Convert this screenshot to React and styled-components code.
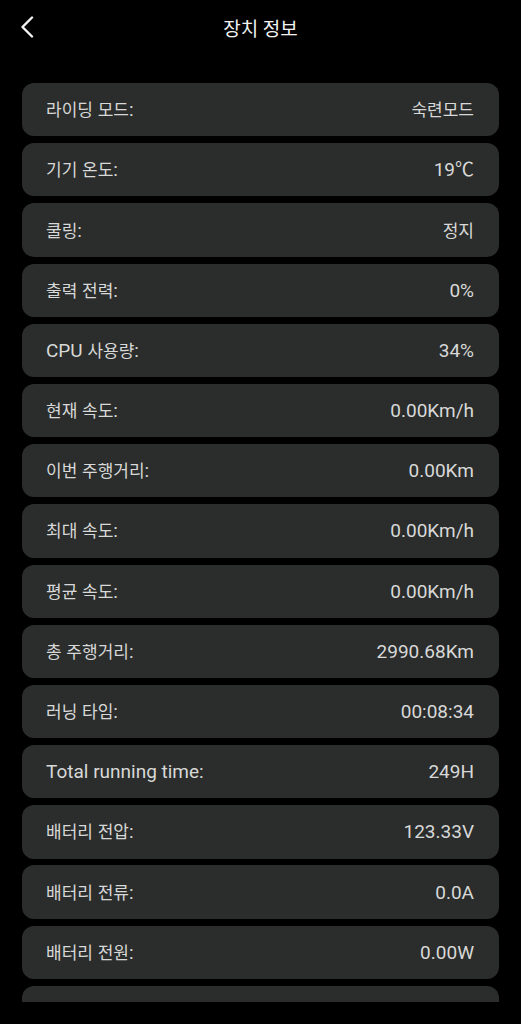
import React from "react";
import styled, { createGlobalStyle } from "styled-components";

const GlobalStyle = createGlobalStyle`
  html, body {
    margin: 0;
    padding: 0;
    background: #000;
  }
  body {
    font-family: Roboto, "Noto Sans CJK KR", sans-serif;
    -webkit-font-smoothing: antialiased;
  }
`;

const Page = styled.div`
  height: 1024px;
  display: flex;
  flex-direction: column;
  background: #000;
  color: #dcdcdc;
`;

const Header = styled.header`
  flex: none;
  height: 54px;
  display: flex;
  align-items: center;
  justify-content: center;
  position: relative;
`;

const BackButton = styled.button`
  position: absolute;
  left: 14px;
  top: 12px;
  width: 26px;
  height: 30px;
  padding: 0;
  border: 0;
  background: none;
  display: flex;
  align-items: center;
  justify-content: center;
  cursor: pointer;
`;

const Title = styled.h1`
  margin: 0;
  font-size: 19px;
  font-weight: 400;
  color: #f2f2f2;
`;

const Scroller = styled.div`
  flex: 1;
  margin-bottom: 22px;
  overflow: hidden;
  padding: 29px 22px 0;
  display: flex;
  flex-direction: column;
  gap: 6.9px;
`;

const Row = styled.div`
  flex: none;
  height: 53.3px;
  border-radius: 12px;
  background: #2a2d2b;
  display: flex;
  align-items: center;
  justify-content: space-between;
  padding: 0 25px 0 24px;
  font-size: 19px;
  line-height: 1;
`;

const Text = styled.span`
  color: #d8d8d8;
  white-space: nowrap;
`;

// hangul in the device font is narrower than Noto CJK, so it gets a smaller size
const Hangul = styled.span`
  font-size: 17px;
`;

function Mixed({ children }) {
  return children
    .split(/([\uAC00-\uD7A3]+)/)
    .filter(Boolean)
    .map((part, i) =>
      /[\uAC00-\uD7A3]/.test(part) ? <Hangul key={i}>{part}</Hangul> : part
    );
}

const items = [
  ["라이딩 모드:", "숙련모드"],
  ["기기 온도:", "19℃"],
  ["쿨링:", "정지"],
  ["출력 전력:", "0%"],
  ["CPU 사용량:", "34%"],
  ["현재 속도:", "0.00Km/h"],
  ["이번 주행거리:", "0.00Km"],
  ["최대 속도:", "0.00Km/h"],
  ["평균 속도:", "0.00Km/h"],
  ["총 주행거리:", "2990.68Km"],
  ["러닝 타임:", "00:08:34"],
  ["Total running time:", "249H"],
  ["배터리 전압:", "123.33V"],
  ["배터리 전류:", "0.0A"],
  ["배터리 전원:", "0.00W"],
];

export default function App() {
  return (
    <Page>
      <GlobalStyle />
      <Header>
        <BackButton aria-label="back">
          <svg width="14" height="22" viewBox="0 0 14 22" fill="none">
            <path
              d="M12 1.5L2.5 11L12 20.5"
              stroke="#f2f2f2"
              strokeWidth="2.4"
              strokeLinecap="round"
              strokeLinejoin="round"
            />
          </svg>
        </BackButton>
        <Title>장치 정보</Title>
      </Header>
      <Scroller>
        {items.map(([label, value]) => (
          <Row key={label}>
            <Text>
              <Mixed>{label}</Mixed>
            </Text>
            <Text>
              <Mixed>{value}</Mixed>
            </Text>
          </Row>
        ))}
        {/* next row, scrolled mostly out of view */}
        <Row />
      </Scroller>
    </Page>
  );
}
